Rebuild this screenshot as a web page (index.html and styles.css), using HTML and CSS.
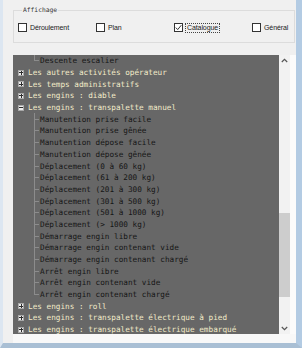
FILE: index.html
```html
<!DOCTYPE html>
<html lang="fr">
<head>
    <meta charset="UTF-8">
    <title>Affichage</title>
    <link rel="stylesheet" href="styles.css">
</head>
<body>
    <div class="window">
        <fieldset class="group">
            <legend>Affichage</legend>
            <div class="options">
                <label class="option"><span class="box"></span><span class="caption">Déroulement</span></label>
                <label class="option"><span class="box"></span><span class="caption">Plan</span></label>
                <label class="option">
                    <span class="box">
                        <svg width="7" height="7" viewBox="0 0 7 7"><path d="M0.8 3.6 L2.7 5.6 L6.3 1.2" fill="none" stroke="#333" stroke-width="1"/></svg>
                    </span>
                    <span class="caption focus">Catalogue</span>
                </label>
                <label class="option"><span class="box"></span><span class="caption">Général</span></label>
            </div>
        </fieldset>

        <div class="tree-panel">
            <div class="tree">
                <div class="row child last"><span class="branch"></span><span class="text">Descente escalier</span></div>
                <div class="row parent"><span class="toggle plus"></span><span class="text">Les autres activités opérateur</span></div>
                <div class="row parent"><span class="toggle plus"></span><span class="text">Les temps administratifs</span></div>
                <div class="row parent"><span class="toggle plus"></span><span class="text">Les engins : diable</span></div>
                <div class="row parent"><span class="toggle minus"></span><span class="text">Les engins : transpalette manuel</span></div>
                <div class="row child"><span class="branch"></span><span class="text">Manutention prise facile</span></div>
                <div class="row child"><span class="branch"></span><span class="text">Manutention prise gênée</span></div>
                <div class="row child"><span class="branch"></span><span class="text">Manutention dépose facile</span></div>
                <div class="row child"><span class="branch"></span><span class="text">Manutention dépose gênée</span></div>
                <div class="row child"><span class="branch"></span><span class="text">Déplacement (0 à 60 kg)</span></div>
                <div class="row child"><span class="branch"></span><span class="text">Déplacement (61 à 200 kg)</span></div>
                <div class="row child"><span class="branch"></span><span class="text">Déplacement (201 à 300 kg)</span></div>
                <div class="row child"><span class="branch"></span><span class="text">Déplacement (301 à 500 kg)</span></div>
                <div class="row child"><span class="branch"></span><span class="text">Déplacement (501 à 1000 kg)</span></div>
                <div class="row child"><span class="branch"></span><span class="text">Déplacement (&gt; 1000 kg)</span></div>
                <div class="row child"><span class="branch"></span><span class="text">Démarrage engin libre</span></div>
                <div class="row child"><span class="branch"></span><span class="text">Démarrage engin contenant vide</span></div>
                <div class="row child"><span class="branch"></span><span class="text">Démarrage engin contenant chargé</span></div>
                <div class="row child"><span class="branch"></span><span class="text">Arrêt engin libre</span></div>
                <div class="row child"><span class="branch"></span><span class="text">Arrêt engin contenant vide</span></div>
                <div class="row child last"><span class="branch"></span><span class="text">Arrêt engin contenant chargé</span></div>
                <div class="row parent"><span class="toggle plus"></span><span class="text">Les engins : roll</span></div>
                <div class="row parent"><span class="toggle plus"></span><span class="text">Les engins : transpalette électrique à pied</span></div>
                <div class="row parent"><span class="toggle plus"></span><span class="text">Les engins : transpalette électrique embarqué</span></div>
            </div>

            <div class="scrollbar">
                <div class="arrow">
                    <svg width="7" height="5" viewBox="0 0 7 5"><path d="M0.8 4 L3.5 1.3 L6.2 4" fill="none" stroke="#555" stroke-width="1.2"/></svg>
                </div>
                <div class="track">
                    <div class="thumb"></div>
                </div>
                <div class="arrow">
                    <svg width="7" height="5" viewBox="0 0 7 5"><path d="M0.8 1 L3.5 3.7 L6.2 1" fill="none" stroke="#555" stroke-width="1.2"/></svg>
                </div>
            </div>
            <div class="edge"></div>
        </div>
        <div class="footer"></div>
    </div>
</body>
</html>
```

FILE: styles.css
```css
body {
    margin: 0;
    background-color: #f0f0f0;
    font-family: "Liberation Sans", Arial, sans-serif;
}

.window {
    height: 348px;
    box-sizing: border-box;
    border-left: 3px solid #dce6f1;
    border-right: 6px solid #b3cbe3;
    border-bottom: 5px solid #a9bfd4;
    padding: 6px 0 0 10px;
    display: flex;
    flex-direction: column;
}

/* Affichage group */

.group {
    margin: 0 1px 0 0;
    border: 1px solid #dcdcdc;
    padding: 9px 0 10px 4px;
    min-width: 0;
}

.group legend {
    font-family: "DejaVu Sans Mono", monospace;
    font-size: 6.3px;
    line-height: 8px;
    color: #333;
    padding: 0 1px;
    margin-left: 4px;
}

.options {
    display: grid;
    grid-template-columns: 78px 78px 78px 1fr;
    height: 9px;
}

.option {
    display: flex;
    align-items: center;
    gap: 3px;
}

.box {
    width: 9px;
    height: 9px;
    box-sizing: border-box;
    border: 1px solid #333;
    background-color: #fff;
    display: flex;
    align-items: center;
    justify-content: center;
}

.caption {
    font-size: 7px;
    color: #222;
    letter-spacing: -0.1px;
    line-height: 8px;
}

.caption.focus {
    outline: 1px dotted #444;
    outline-offset: 0;
    padding: 0 1px;
}

/* Tree */

.tree-panel {
    margin-top: 12px;
    height: 279px;
    display: flex;
}

.tree {
    flex: 1;
    min-width: 0;
    background-color: #676767;
    overflow: hidden;
    font-family: "DejaVu Sans Mono", monospace;
    font-size: 7.7px;
}

.row {
    height: 11.7px;
    display: flex;
    align-items: center;
    white-space: nowrap;
}

.parent .text {
    color: #f2ebc9;
    margin-left: 4px;
}

.child .text {
    color: #161616;
    margin-left: 1px;
}

.toggle {
    width: 6px;
    height: 6px;
    margin-left: 5px;
    box-sizing: border-box;
    border: 1px solid #a8a8a8;
    background:
        linear-gradient(#2a2a2a, #2a2a2a) no-repeat center / 4px 1px,
        #ececec;
}

.toggle.plus {
    background:
        linear-gradient(#2a2a2a, #2a2a2a) no-repeat center / 4px 1px,
        linear-gradient(#2a2a2a, #2a2a2a) no-repeat center / 1px 4px,
        #ececec;
}

.branch {
    width: 5px;
    height: 100%;
    margin-left: 21px;
    background:
        linear-gradient(#8c8c8c, #8c8c8c) no-repeat 0 50% / 100% 1px,
        linear-gradient(#8c8c8c, #8c8c8c) no-repeat 0 0 / 1px 100%;
}

.child.last .branch {
    background:
        linear-gradient(#8c8c8c, #8c8c8c) no-repeat 0 50% / 100% 1px,
        linear-gradient(#8c8c8c, #8c8c8c) no-repeat 0 0 / 1px 50%;
}

.scrollbar {
    width: 11px;
    background-color: #f2f2f2;
    display: flex;
    flex-direction: column;
}

.arrow {
    height: 11px;
    display: flex;
    align-items: center;
    justify-content: center;
}

.track {
    flex: 1;
    padding-top: 147px;
}

.thumb {
    height: 84px;
    background-color: #cdcdcd;
}

.edge {
    width: 6px;
    background-color: #fbfbfb;
}

.footer {
    flex: 1;
    background-color: #f8f8f8;
}
```
